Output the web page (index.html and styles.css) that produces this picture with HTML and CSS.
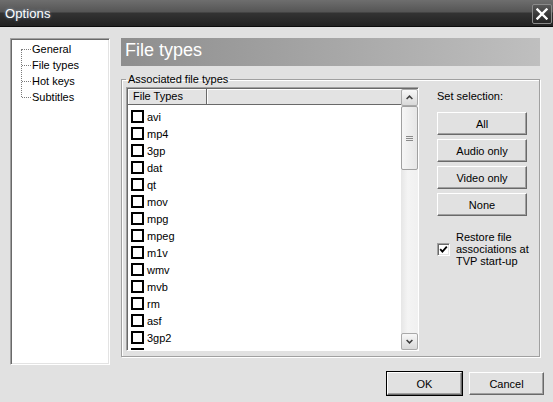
FILE: index.html
```html
<!DOCTYPE html>
<html>
<head>
<meta charset="utf-8">
<title>Options</title>
<link rel="stylesheet" href="styles.css">
</head>
<body>
<div class="window">
  <div class="titlebar">
    <span class="title">Options</span>
    <div class="close">
      <svg width="12" height="12" viewBox="0 0 12 12"><path d="M1.5 1.5 L10.5 10.5 M10.5 1.5 L1.5 10.5" stroke="#fff" stroke-width="2.4" stroke-linecap="square"/></svg>
    </div>
  </div>
  <div class="content">
    <div class="tree">
      <ul class="tree-list">
        <li>General</li>
        <li>File types</li>
        <li>Hot keys</li>
        <li>Subtitles</li>
      </ul>
    </div>
    <div class="page">
      <div class="banner">File types</div>
      <fieldset class="group">
        <legend>Associated file types</legend>
        <div class="group-body">
          <div class="listview">
            <div class="lv-inner">
              <div class="lv-main">
                <div class="lv-header">
                  <div class="lv-col first">File Types</div>
                  <div class="lv-col rest"></div>
                </div>
                <div class="lv-rows">
                  <div class="lv-row"><span class="cb"></span>avi</div>
                  <div class="lv-row"><span class="cb"></span>mp4</div>
                  <div class="lv-row"><span class="cb"></span>3gp</div>
                  <div class="lv-row"><span class="cb"></span>dat</div>
                  <div class="lv-row"><span class="cb"></span>qt</div>
                  <div class="lv-row"><span class="cb"></span>mov</div>
                  <div class="lv-row"><span class="cb"></span>mpg</div>
                  <div class="lv-row"><span class="cb"></span>mpeg</div>
                  <div class="lv-row"><span class="cb"></span>m1v</div>
                  <div class="lv-row"><span class="cb"></span>wmv</div>
                  <div class="lv-row"><span class="cb"></span>mvb</div>
                  <div class="lv-row"><span class="cb"></span>rm</div>
                  <div class="lv-row"><span class="cb"></span>asf</div>
                  <div class="lv-row"><span class="cb"></span>3gp2</div>
                  <div class="lv-row"><span class="cb"></span>3g2</div>
                </div>
              </div>
              <div class="scrollbar">
                <div class="sb-btn">
                  <svg width="7" height="5" viewBox="0 0 7 5"><path d="M0.6 4 L3.5 1.1 L6.4 4" stroke="#3c3c3c" stroke-width="1.5" fill="none"/></svg>
                </div>
                <div class="sb-track">
                  <div class="sb-thumb">
                    <span class="grip"></span><span class="grip"></span><span class="grip"></span>
                  </div>
                </div>
                <div class="sb-btn">
                  <svg width="7" height="5" viewBox="0 0 7 5"><path d="M0.6 1 L3.5 3.9 L6.4 1" stroke="#3c3c3c" stroke-width="1.5" fill="none"/></svg>
                </div>
              </div>
            </div>
          </div>
          <div class="side">
            <div class="side-label">Set selection:</div>
            <div class="side-buttons">
              <button class="btn">All</button>
              <button class="btn">Audio only</button>
              <button class="btn">Video only</button>
              <button class="btn">None</button>
            </div>
            <div class="restore">
              <span class="check">
                <svg width="9" height="9" viewBox="0 0 9 9"><path d="M1.2 4.2 L3.4 6.6 L7.8 1.6" stroke="#000" stroke-width="1.8" fill="none"/></svg>
              </span>
              <span class="restore-text">Restore file<br>associations at<br>TVP start-up</span>
            </div>
          </div>
        </div>
      </fieldset>
    </div>
  </div>
  <div class="footer">
    <button class="btn dlg default">OK</button>
    <button class="btn dlg">Cancel</button>
  </div>
</div>
</body>
</html>
```
FILE: styles.css
```css
* { box-sizing: border-box; }
html, body { margin: 0; padding: 0; }
body {
  width: 553px;
  height: 402px;
  overflow: hidden;
  background: #e1e1e1;
  font-family: "Liberation Sans", Arial, sans-serif;
  font-size: 11px;
  color: #000;
}
.window { width: 553px; height: 402px; }

.titlebar {
  height: 27px;
  display: flex;
  align-items: center;
  justify-content: space-between;
  padding: 0 1px 0 5px;
  background: linear-gradient(#6e6e6e 0%, #555 46%, #333 50%, #222 100%);
  border-bottom: 1px solid #0c0c0c;
}
.title {
  color: #fff;
  font-size: 13px;
  letter-spacing: 0.1px;
  text-shadow: 0 0 3px rgba(160,210,255,0.6);
  margin-top: 1px;
}
.close {
  width: 20px;
  height: 20px;
  border: 1px solid #8a8a8a;
  border-radius: 2px;
  background: linear-gradient(#5a5a5a, #3a3a3a 50%, #262626);
  display: flex;
  align-items: center;
  justify-content: center;
  margin-top: 1px;
}

.content {
  display: flex;
  height: 338px;
  padding: 11px 0 0 10px;
}
.tree {
  width: 100px;
  height: 327px;
  background: #fff;
  border: 1px solid;
  border-color: #a0a0a0 #fff #fff #a0a0a0;
  box-shadow: inset 1px 1px 0 #696969, inset -1px -1px 0 #e3e3e3;
  padding: 1px;
}
.tree-list {
  list-style: none;
  margin: 0;
  padding: 1px 0 0 0;
  position: relative;
}
.tree-list::before {
  content: "";
  position: absolute;
  left: 9px;
  top: 9px;
  height: 48px;
  border-left: 1px dotted #7a7a7a;
}
.tree-list li {
  display: flex;
  align-items: center;
  height: 16px;
  line-height: 16px;
  color: #000;
  white-space: nowrap;
}
.tree-list li::before {
  content: "";
  width: 9px;
  margin: 1px 1px 0 10px;
  border-top: 1px dotted #7a7a7a;
}

.page {
  width: 419px;
  margin-left: 11px;
  display: flex;
  flex-direction: column;
}
.banner {
  height: 28px;
  line-height: 24px;
  padding-left: 4px;
  color: #fff;
  font-size: 18px;
  background: linear-gradient(to right, #8e8e8e, #bfbfbf);
}

.group {
  margin: 6px 0 0 0;
  height: 285px;
  padding: 1px 12px 5px 4px;
  border: 1px solid #a0a0a0;
  box-shadow: inset 1px 1px 0 #fff, 1px 1px 0 #fff;
  min-width: 0;
}
.group legend {
  padding: 0 2px;
  margin-left: 0;
  line-height: 14px;
  font-size: 11px;
}
.group-body {
  display: flex;
  gap: 17px;
}

.listview {
  width: 293px;
  height: 264px;
  border: 1px solid;
  border-color: #a0a0a0 #fff #fff #a0a0a0;
  background: #fff;
}
.lv-inner {
  height: 100%;
  display: flex;
  border: 1px solid;
  border-color: #696969 #e3e3e3 #e3e3e3 #696969;
  border-width: 1px 0 0 1px;
  overflow: hidden;
}
.lv-main {
  flex: 1;
  overflow: hidden;
}
.lv-header {
  display: flex;
  height: 16px;
}
.lv-col {
  background: #e3e3e3;
  border-bottom: 1px solid #696969;
  box-shadow: inset 1px 1px 0 #fff;
  line-height: 15px;
  padding-left: 5px;
  white-space: nowrap;
}
.lv-col.first {
  width: 79px;
  border-right: 1px solid #696969;
}
.lv-col.rest { flex: 1; }
.lv-rows { padding-top: 3px; }
.lv-row {
  display: flex;
  align-items: center;
  height: 17px;
  padding-left: 3px;
  white-space: nowrap;
}
.cb {
  width: 13px;
  height: 13px;
  border: 2px solid #000;
  background: #fff;
  margin-right: 3px;
  flex: none;
}

.scrollbar {
  width: 17px;
  display: flex;
  flex-direction: column;
  background: linear-gradient(to right, #e6e6e6, #f4f4f4 40%, #f0f0f0);
}
.sb-btn {
  height: 17px;
  border: 1px solid #a9a9a9;
  border-radius: 2px;
  background: linear-gradient(#f8f8f8, #e8e8e8 50%, #d9d9d9);
  display: flex;
  align-items: center;
  justify-content: center;
  flex: none;
}
.sb-track { flex: 1; }
.sb-thumb {
  height: 64px;
  border: 1px solid #a0a0a0;
  border-radius: 2px;
  background: linear-gradient(to right, #f6f6f6, #e6e6e6);
  display: flex;
  flex-direction: column;
  align-items: center;
  justify-content: center;
  gap: 1px;
}
.grip {
  width: 7px;
  height: 1px;
  background: #8a8a8a;
}

.side {
  width: 91px;
  display: flex;
  flex-direction: column;
}
.side-label {
  margin: 3px 0 0 1px;
  line-height: 13px;
}
.side-buttons {
  margin-top: 9px;
  display: flex;
  flex-direction: column;
  gap: 4px;
  padding-left: 1px;
}
.btn {
  height: 23px;
  width: 90px;
  font-family: "Liberation Sans", Arial, sans-serif;
  font-size: 11px;
  color: #000;
  background: #e1e1e1;
  border: 1px solid;
  border-color: #fff #696969 #696969 #fff;
  box-shadow: inset -1px -1px 0 #a0a0a0;
  padding: 0;
  border-radius: 0;
}
.restore {
  margin-top: 15px;
  display: flex;
  align-items: center;
  gap: 6px;
  padding-left: 1px;
}
.check {
  width: 13px;
  height: 13px;
  flex: none;
  background: #fff;
  border: 1px solid;
  border-color: #a0a0a0 #fff #fff #a0a0a0;
  box-shadow: inset 1px 1px 0 #696969, inset -1px -1px 0 #e3e3e3;
  display: flex;
  align-items: center;
  justify-content: center;
}
.restore-text {
  line-height: 12px;
  white-space: nowrap;
}

.footer {
  display: flex;
  justify-content: flex-end;
  gap: 7px;
  padding: 7px 9px 0 0;
}
.btn.dlg { width: 75px; }
.btn.default {
  outline: 1px solid #000;
  outline-offset: 0;
  border-color: #fff #696969 #696969 #fff;
}
```
